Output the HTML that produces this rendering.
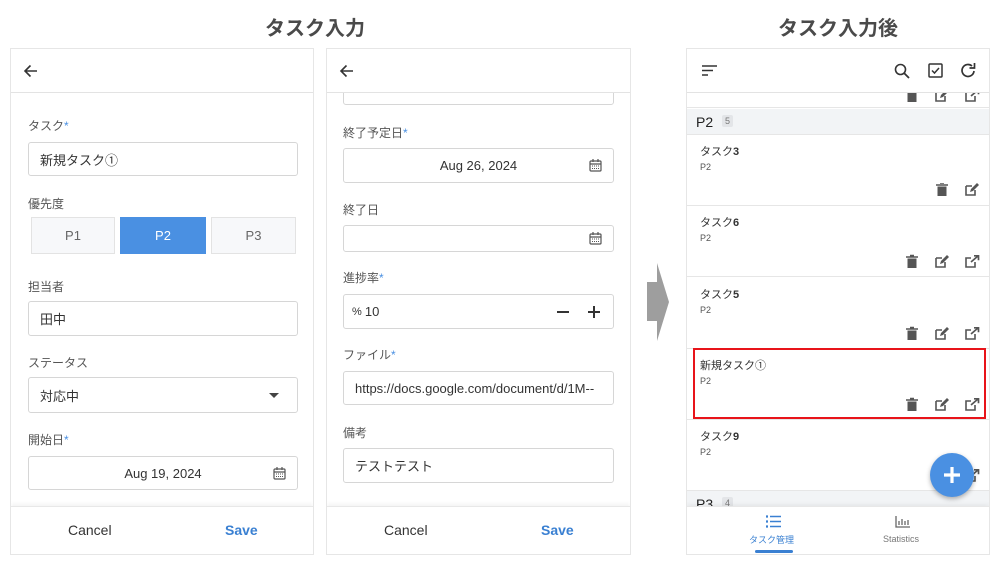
<!DOCTYPE html>
<html><head><meta charset="utf-8"><style>
*{box-sizing:border-box;margin:0;padding:0}
body{width:1000px;height:569px;background:#fff;position:relative;overflow:hidden;font-family:"Liberation Sans","Noto Sans CJK JP",sans-serif;color:#333}
.a{position:absolute}
.title{font-size:20px;font-weight:bold;color:#4a4a4a;top:12px}
.panel{position:absolute;top:48px;height:507px;border:1px solid #e6e6e6;background:#fff;overflow:hidden}
.hdr{position:absolute;left:0;right:0;top:0;height:44px;border-bottom:1px solid #e3e3e3;background:#fff;z-index:2}
.lbl{position:absolute;font-size:12px;color:#555}
.lbl b{color:#4a90e2;font-weight:normal}
.inp{position:absolute;border:1px solid #d6d6d6;border-radius:3px;background:#fff;font-size:13px;color:#333;padding-left:11px;display:flex;align-items:center}
.foot{position:absolute;left:0;right:0;bottom:0;height:48px;border-top:1px solid #e8e8e8;box-shadow:0 -2px 4px rgba(0,0,0,.05);background:#fff;font-size:14px}
.btn{position:absolute;top:216px;height:37px;border:1px solid #e3e3e3;background:#f7f8fa;font-size:13px;color:#666;display:flex;align-items:center;justify-content:center}
.card{position:absolute;left:0;right:0;height:71px;border-bottom:1px solid #e6e6e6;background:#fff}
.card .t{position:absolute;left:13px;top:8px;font-size:11px;color:#333}
.card .p{position:absolute;left:13px;top:27px;font-size:9px;color:#555}
.ic{position:absolute;top:48px}
</style></head><body>
<div class="a title" style="left:265px">タスク入力</div>
<div class="a title" style="left:778px">タスク入力後</div>

<!-- Panel 1 -->
<div class="panel" style="left:10px;width:304px">
 <div class="hdr"><svg class="a" style="left:12px;top:14px" width="16" height="16" viewBox="0 0 16 16"><path d="M14 8H2M7.5 2.5L2 8l5.5 5.5" fill="none" stroke="#333" stroke-width="1.6"/></svg></div>
 <div class="lbl" style="left:17px;top:68px">タスク<b>*</b></div>
 <div class="inp" style="left:17px;top:93px;width:270px;height:34px">新規タスク①</div>
 <div class="lbl" style="left:17px;top:146px">優先度</div>
 <div class="btn" style="left:20px;top:168px;width:84px">P1</div>
 <div class="btn" style="left:109px;top:168px;width:86px;background:#4a90e2;color:#fff;border-color:#4a90e2">P2</div>
 <div class="btn" style="left:200px;top:168px;width:85px">P3</div>
 <div class="lbl" style="left:17px;top:229px">担当者</div>
 <div class="inp" style="left:17px;top:252px;width:270px;height:35px">田中</div>
 <div class="lbl" style="left:17px;top:305px">ステータス</div>
 <div class="inp" style="left:17px;top:328px;width:270px;height:36px">対応中<svg class="a" style="right:18px;top:15px" width="10" height="6"><path d="M0 0h10L5 5z" fill="#444"/></svg></div>
 <div class="lbl" style="left:17px;top:382px">開始日<b>*</b></div>
 <div class="inp" style="left:17px;top:407px;width:270px;height:34px;justify-content:center;padding:0">Aug 19, 2024<svg class="a" style="right:11px;top:10px" width="13" height="13" viewBox="0 0 13 13"><rect x="1" y="2" width="11" height="10" rx="1" fill="none" stroke="#555" stroke-width="1.2"/><path d="M1 5h11M4 0v3M9 0v3" stroke="#555" stroke-width="1.2"/><path d="M3 7h7M3 9.5h7" stroke="#555" stroke-dasharray="1 1"/></svg></div>
 <div class="foot"><span class="a" style="left:57px;top:15px">Cancel</span><span class="a" style="left:214px;top:15px;color:#3a80d2;font-weight:bold">Save</span></div>
</div>

<!-- Panel 2 -->
<div class="panel" style="left:326px;width:305px">
 <div class="hdr"><svg class="a" style="left:12px;top:14px" width="16" height="16" viewBox="0 0 16 16"><path d="M14 8H2M7.5 2.5L2 8l5.5 5.5" fill="none" stroke="#333" stroke-width="1.6"/></svg></div>
 <div class="inp" style="left:16px;top:20px;width:271px;height:36px"></div>
 <div class="lbl" style="left:16px;top:75px">終了予定日<b>*</b></div>
 <div class="inp" style="left:16px;top:99px;width:271px;height:35px;justify-content:center;padding:0">Aug 26, 2024<svg class="a" style="right:11px;top:10px" width="13" height="13" viewBox="0 0 13 13"><rect x="1" y="2" width="11" height="10" rx="1" fill="none" stroke="#555" stroke-width="1.2"/><path d="M1 5h11M4 0v3M9 0v3" stroke="#555" stroke-width="1.2"/><path d="M3 7h7M3 9.5h7" stroke="#555" stroke-dasharray="1 1"/></svg></div>
 <div class="lbl" style="left:16px;top:152px">終了日</div>
 <div class="inp" style="left:16px;top:176px;width:271px;height:27px"><svg class="a" style="right:11px;top:6px" width="13" height="13" viewBox="0 0 13 13"><rect x="1" y="2" width="11" height="10" rx="1" fill="none" stroke="#555" stroke-width="1.2"/><path d="M1 5h11M4 0v3M9 0v3" stroke="#555" stroke-width="1.2"/><path d="M3 7h7M3 9.5h7" stroke="#555" stroke-dasharray="1 1"/></svg></div>
 <div class="lbl" style="left:16px;top:220px">進捗率<b>*</b></div>
 <div class="inp" style="left:16px;top:245px;width:271px;height:35px;padding-left:8px"><span style="font-size:11px">%&nbsp;</span>10<svg class="a" style="left:212px;top:10px" width="44" height="14"><path d="M1 7h12M32 7h12M38 1v12" stroke="#333" stroke-width="2"/></svg></div>
 <div class="lbl" style="left:16px;top:297px">ファイル<b>*</b></div>
 <div class="inp" style="left:16px;top:322px;width:271px;height:34px;white-space:nowrap;overflow:hidden">https://docs.google.com/document/d/1M--</div>
 <div class="lbl" style="left:16px;top:375px">備考</div>
 <div class="inp" style="left:16px;top:399px;width:271px;height:35px">テストテスト</div>
 <div class="foot"><span class="a" style="left:57px;top:15px">Cancel</span><span class="a" style="left:214px;top:15px;color:#3a80d2;font-weight:bold">Save</span></div>
</div>

<!-- arrow -->
<svg class="a" style="left:640px;top:260px" width="35" height="85"><path d="M7 22h10V3l12 39-12 39V61H7z" fill="#9e9e9e"/></svg>

<!-- Panel 3 -->
<div class="panel" style="left:686px;width:304px">
 <div class="hdr" style="z-index:6">
  <svg class="a" style="left:15px;top:16px" width="16" height="12"><path d="M0 1h15M0 5.5h11M0 10h6" stroke="#333" stroke-width="1.6"/></svg>
  <svg class="a" style="left:207px;top:14px" width="16" height="16"><circle cx="6.5" cy="6.5" r="5" fill="none" stroke="#333" stroke-width="1.6"/><path d="M10 10l5 5" stroke="#333" stroke-width="1.8"/></svg>
  <svg class="a" style="left:241px;top:14px" width="15" height="15"><rect x="1" y="1" width="13" height="13" rx="1" fill="none" stroke="#333" stroke-width="1.5"/><path d="M4 7.5l2.5 2.5 4.5-5" fill="none" stroke="#333" stroke-width="1.5"/></svg>
  <svg class="a" style="left:273px;top:13px" width="17" height="17" viewBox="0 0 17 17"><path d="M14 9a6 6 0 1 1-2-5" fill="none" stroke="#333" stroke-width="1.7"/><path d="M14.5 1v5h-5" fill="none" stroke="#333" stroke-width="1.7"/></svg>
 </div>
 <div class="a" style="left:0;right:0;top:44px;height:15px;border-bottom:1px solid #e6e6e6"></div>
 <div class="a" style="left:0;right:0;top:60px;height:26px;background:#f2f4f6;border-bottom:1px solid #e6e6e6"><span class="a" style="left:9px;top:5px;font-size:14px;color:#222">P2</span><span class="a" style="left:35px;top:6px;font-size:9px;color:#777;background:#e3e5e8;padding:1px 3px;border-radius:2px">5</span></div>
 <div class="card" style="top:86px"><div class="t">タスク<b>3</b></div><div class="p">P2</div>
  <svg class="ic" style="left:249px" width="12" height="13"><path d="M0 2h12M4 0h4" stroke="#555" stroke-width="1.5"/><path d="M1.5 3.5h9v9.5h-9z" fill="#555"/></svg>
  <svg class="ic" style="left:278px" width="14" height="13"><path d="M1 3h6M1 3v9h9V7" fill="none" stroke="#555" stroke-width="1.6"/><path d="M5 9l1-3 6-6 2 2-6 6z" fill="#555"/></svg></div>
 <div class="card" style="top:157px"><div class="t">タスク<b>6</b></div><div class="p">P2</div></div>
 <div class="card" style="top:229px"><div class="t">タスク<b>5</b></div><div class="p">P2</div></div>
 <div class="card" style="top:300px"><div class="t">新規タスク①</div><div class="p">P2</div></div>
 <div class="a" style="left:6px;top:299px;width:293px;height:71px;border:2px solid #e8141a;z-index:3"></div>
 <div class="card" style="top:371px"><div class="t">タスク<b>9</b></div><div class="p">P2</div></div>
 <div class="a" style="left:0;right:0;top:442px;height:30px;background:#f2f4f6"><span class="a" style="left:9px;top:5px;font-size:14px;color:#222">P3</span><span class="a" style="left:35px;top:6px;font-size:9px;color:#777;background:#e3e5e8;padding:1px 3px;border-radius:2px">4</span></div>
 <div class="a" style="left:243px;top:404px;width:44px;height:44px;border-radius:50%;background:#4a90e2;box-shadow:0 2px 5px rgba(0,0,0,.3);z-index:5"><svg class="a" style="left:13px;top:13px" width="18" height="18"><path d="M9 1v16M1 9h16" stroke="#fff" stroke-width="3.2"/></svg></div>
 <div class="foot" style="z-index:6">
  <svg class="a" style="left:79px;top:8px" width="16" height="13"><path d="M0 1.5h2M0 6.5h2M0 11.5h2" stroke="#3a80d2" stroke-width="2.2"/><path d="M4 1.5h11M4 6.5h11M4 11.5h11" stroke="#3a80d2" stroke-width="1.6"/></svg>
  <span class="a" style="left:62px;top:26px;font-size:9px;color:#3a80d2">タスク管理</span>
  <div class="a" style="left:68px;top:43px;width:38px;height:3px;background:#3a80d2;border-radius:2px"></div>
  <svg class="a" style="left:208px;top:9px" width="15" height="12"><path d="M1 0v11h14M4 9V5M7 9V3M10 9V5M13 9V4" stroke="#666" stroke-width="1.3" fill="none"/></svg>
  <span class="a" style="left:196px;top:27px;font-size:9px;color:#777">Statistics</span>
 </div>
 <svg class="a" style="left:0;top:0;z-index:4;pointer-events:none" width="304" height="507">
  <defs>
   <g id="tr"><path d="M0 2h12M4 0.5h4" stroke="#555" stroke-width="1.5"/><path d="M1.5 3.5h9v9.5h-9z" fill="#555"/></g>
   <g id="ed"><path d="M1 3h6M1 3v9h9V7" fill="none" stroke="#555" stroke-width="1.6"/><path d="M5 9l1-3 6-6 2 2-6 6z" fill="#555"/></g>
   <g id="ex"><path d="M6 3H1v9h9V7" fill="none" stroke="#555" stroke-width="1.6"/><path d="M6 7l7-6M9 0.8h4.5v4.5" fill="none" stroke="#555" stroke-width="1.7"/></g>
  </defs>
  <use href="#tr" x="219" y="40"/><use href="#ed" x="248" y="40"/><use href="#ex" x="278" y="40"/>
  <use href="#tr" x="219" y="206"/><use href="#ed" x="248" y="206"/><use href="#ex" x="278" y="206"/>
  <use href="#tr" x="219" y="278"/><use href="#ed" x="248" y="278"/><use href="#ex" x="278" y="278"/>
  <use href="#tr" x="219" y="349"/><use href="#ed" x="248" y="349"/><use href="#ex" x="278" y="349"/>
  <use href="#ex" x="278" y="420"/>
 </svg>
</div>
</body></html>
